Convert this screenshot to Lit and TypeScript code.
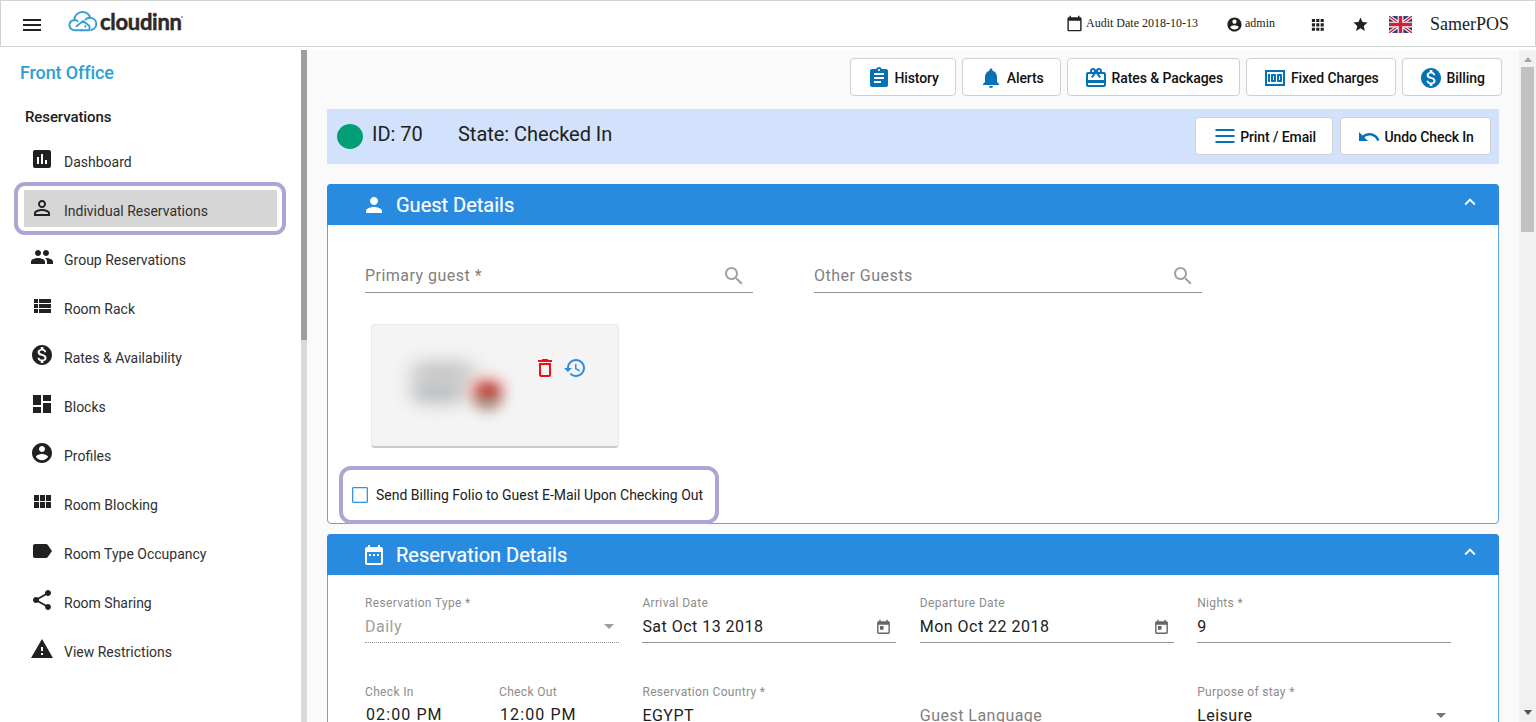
import { LitElement, html, css, svg, nothing } from "lit";
import { customElement, property } from "lit/decorators.js";
import { classMap } from "lit/directives/class-map.js";

const ICONS: Record<string, string> = {
  menu: "M3 18h18v-2H3v2zm0-5h18v-2H3v2zm0-7v2h18V6H3z",
  lines: "M2.500 18h19v-2h-19v2zm0-6h19v-2h-19v2zm0-8v2h19v-2h-19z",
  assessment:
    "M19 3H5c-1.1 0-2 .9-2 2v14c0 1.1.9 2 2 2h14c1.1 0 2-.9 2-2V5c0-1.1-.9-2-2-2zM9 17H7v-7h2v7zm4 0h-2V7h2v10zm4 0h-2v-4h2v4z",
  personOutline:
    "M12 5.9c1.16 0 2.1.94 2.1 2.1s-.94 2.1-2.1 2.1S9.9 9.16 9.9 8s.94-2.1 2.1-2.1m0 9c2.97 0 6.1 1.46 6.1 2.1v1.1H5.9V17c0-.64 3.13-2.1 6.1-2.1M12 4C9.79 4 8 5.79 8 8s1.79 4 4 4 4-1.79 4-4-1.79-4-4-4zm0 9c-2.67 0-8 1.34-8 4v3h16v-3c0-2.66-5.33-4-8-4z",
  group:
    "M16 11c1.66 0 2.99-1.34 2.99-3S17.66 5 16 5c-1.66 0-3 1.34-3 3s1.34 3 3 3zm-8 0c1.66 0 2.99-1.34 2.99-3S9.66 5 8 5C6.34 5 5 6.34 5 8s1.34 3 3 3zm0 2c-2.33 0-7 1.17-7 3.5V19h14v-2.5c0-2.33-4.67-3.5-7-3.5zm8 0c-.29 0-.62.02-.97.05 1.16.84 1.97 1.97 1.97 3.45V19h6v-2.5c0-2.33-4.67-3.5-7-3.5z",
  viewList:
    "M4 14h4v-4H4v4zm0 5h4v-4H4v4zM4 9h4V5H4v4zm5 5h12v-4H9v4zm0 5h12v-4H9v4zM9 5v4h12V5H9z",
  monetization:
    "M12 2C6.48 2 2 6.48 2 12s4.48 10 10 10 10-4.48 10-10S17.52 2 12 2zm1.41 16.09V20h-2.67v-1.93c-1.71-.36-3.16-1.46-3.27-3.4h1.96c.1 1.05.82 1.87 2.65 1.87 1.96 0 2.4-.98 2.4-1.59 0-.83-.44-1.61-2.67-2.14-2.48-.6-4.18-1.62-4.18-3.67 0-1.72 1.39-2.84 3.11-3.21V4h2.67v1.95c1.86.45 2.79 1.86 2.85 3.39H14.3c-.05-1.11-.64-1.87-2.22-1.87-1.5 0-2.4.68-2.4 1.64 0 .84.65 1.39 2.67 1.91s4.18 1.39 4.18 3.91c-.01 1.83-1.38 2.83-3.12 3.16z",
  dashboard: "M3 13h8V3H3v10zm0 8h8v-6H3v6zm10 0h8V11h-8v10zm0-18v6h8V3h-8z",
  account:
    "M12 2C6.48 2 2 6.48 2 12s4.48 10 10 10 10-4.48 10-10S17.52 2 12 2zm0 3c1.66 0 3 1.34 3 3s-1.34 3-3 3-3-1.34-3-3 1.34-3 3-3zm0 14.2c-2.5 0-4.71-1.28-6-3.22.03-1.99 4-3.08 6-3.08 1.99 0 5.97 1.09 6 3.08-1.29 1.94-3.5 3.22-6 3.22z",
  viewModule:
    "M4 11h5V5H4v6zm0 7h5v-6H4v6zm6 0h5v-6h-5v6zm6 0h5v-6h-5v6zm-6-7h5V5h-5v6zm6-6v6h5V5h-5z",
  label:
    "M17.63 5.84C17.27 5.33 16.67 5 16 5L5 5.01C3.9 5.01 3 5.9 3 7v10c0 1.1.9 1.99 2 1.99L16 19c.67 0 1.27-.33 1.63-.84L22 12l-4.37-6.16z",
  share:
    "M18 16.08c-.76 0-1.44.3-1.96.77L8.91 12.7c.05-.23.09-.46.09-.7s-.04-.47-.09-.7l7.05-4.11c.54.5 1.25.81 2.04.81 1.66 0 3-1.34 3-3s-1.34-3-3-3-3 1.34-3 3c0 .24.04.47.09.7L8.04 9.81C7.5 9.31 6.79 9 6 9c-1.66 0-3 1.34-3 3s1.34 3 3 3c.79 0 1.5-.31 2.04-.81l7.12 4.16c-.05.21-.08.43-.08.65 0 1.61 1.31 2.92 2.92 2.92 1.61 0 2.92-1.31 2.92-2.92s-1.31-2.92-2.92-2.92z",
  warning: "M1 21h22L12 2 1 21zm12-3h-2v-2h2v2zm0-4h-2v-4h2v4z",
  assignment:
    "M19 3h-4.18C14.4 1.84 13.3 1 12 1c-1.3 0-2.4.84-2.82 2H5c-1.1 0-2 .9-2 2v14c0 1.1.9 2 2 2h14c1.1 0 2-.9 2-2V5c0-1.1-.9-2-2-2zm-7 0c.55 0 1 .45 1 1s-.45 1-1 1-1-.45-1-1 .45-1 1-1zm2 14H7v-2h7v2zm3-4H7v-2h10v2zm0-4H7V7h10v2z",
  bell: "M12 22c1.1 0 2-.9 2-2h-4c0 1.1.89 2 2 2zm6-6v-5c0-3.07-1.64-5.64-4.5-6.32V4c0-.83-.67-1.5-1.5-1.5s-1.5.67-1.5 1.5v.68C7.63 5.36 6 7.92 6 11v5l-2 2v1h16v-1l-2-2z",
  gift: "M20 6h-2.18c.11-.31.18-.65.18-1 0-1.66-1.34-3-3-3-1.05 0-1.96.54-2.5 1.35l-.5.67-.5-.68C10.96 2.54 10.05 2 9 2 7.34 2 6 3.34 6 5c0 .35.07.69.18 1H4c-1.11 0-1.99.89-1.99 2L2 19c0 1.11.89 2 2 2h16c1.11 0 2-.89 2-2V8c0-1.11-.89-2-2-2zm-5-2c.55 0 1 .45 1 1s-.45 1-1 1-1-.45-1-1 .45-1 1-1zM9 4c.55 0 1 .45 1 1s-.45 1-1 1-1-.45-1-1 .45-1 1-1zm11 15H4v-2h16v2zm0-5H4V8h5.08L7 10.83 8.62 12 11 8.76l1-1.36 1 1.36L15.38 12 17 10.83 14.92 8H20v6z",
  money:
    "M5 8h2v8H5V8zm7 0H9c-.55 0-1 .45-1 1v6c0 .55.45 1 1 1h3c.55 0 1-.45 1-1V9c0-.55-.45-1-1-1zm-1 6h-1v-4h1v4zm7-6h-3c-.55 0-1 .45-1 1v6c0 .55.45 1 1 1h3c.55 0 1-.45 1-1V9c0-.55-.45-1-1-1zm-1 6h-1v-4h1v4zM2 4v16h20V4H2zm2 14V6h16v12H4z",
  undo: "M12.5 8c-2.65 0-5.05.99-6.9 2.6L2 7v9h9l-3.62-3.62c1.39-1.16 3.16-1.88 5.12-1.88 3.54 0 6.55 2.31 7.6 5.5l2.37-.78C21.08 11.03 17.15 8 12.5 8z",
  person:
    "M12 12c2.21 0 4-1.79 4-4s-1.79-4-4-4-4 1.79-4 4 1.79 4 4 4zm0 2c-2.67 0-8 1.34-8 4v2h16v-2c0-2.66-5.33-4-8-4z",
  dateRange:
    "M9 11H7v2h2v-2zm4 0h-2v2h2v-2zm4 0h-2v2h2v-2zm2-7h-1V2h-2v2H8V2H6v2H5c-1.11 0-1.99.9-1.99 2L3 20c0 1.1.89 2 2 2h14c1.1 0 2-.9 2-2V6c0-1.1-.9-2-2-2zm0 16H5V9h14v11z",
  expandLess: "M12 8l-6 6 1.41 1.41L12 10.83l4.59 4.58L18 14z",
  search:
    "M15.5 14h-.79l-.28-.27C15.41 12.59 16 11.11 16 9.5 16 5.91 13.09 3 9.5 3S3 5.91 3 9.5 5.91 16 9.5 16c1.61 0 3.09-.59 4.23-1.57l.27.28v.79l5 4.99L20.49 19l-4.99-5zm-6 0C7.01 14 5 11.99 5 9.5S7.01 5 9.5 5 14 7.01 14 9.5 11.99 14 9.5 14z",
  trash:
    "M6 19c0 1.1.9 2 2 2h8c1.1 0 2-.9 2-2V7H6v12zM8 9h8v10H8V9zm7.5-5l-1-1h-5l-1 1H5v2h14V4z",
  history:
    "M13 3c-4.97 0-9 4.03-9 9H1l3.89 3.89.07.14L9 12H6c0-3.87 3.13-7 7-7s7 3.13 7 7-3.13 7-7 7c-1.93 0-3.68-.79-4.94-2.06l-1.42 1.42C8.27 19.99 10.51 21 13 21c4.97 0 9-4.03 9-9s-4.03-9-9-9zm-1 5v5l4.28 2.54.72-1.21-3.5-2.08V8H12z",
  today:
    "M19 3h-1V1h-2v2H8V1H6v2H5c-1.11 0-1.99.9-1.99 2L3 19c0 1.1.89 2 2 2h14c1.1 0 2-.9 2-2V5c0-1.1-.9-2-2-2zm0 16H5V8h14v11zM7 10h5v5H7z",
  calendar:
    "M20 3h-1V1h-2v2H7V1H5v2H4c-1.1 0-2 .9-2 2v16c0 1.1.9 2 2 2h16c1.1 0 2-.9 2-2V5c0-1.1-.9-2-2-2zm0 18H4V8h16v13z",
  star: "M12 17.27L18.18 21l-1.64-7.03L22 9.24l-7.19-.61L12 2 9.19 8.63 2 9.24l5.46 4.73L5.82 21z",
  grid: "M3 3h5v5H3zM10 3h5v5h-5zM17 3h5v5h-5zM3 10h5v5H3zM10 10h5v5h-5zM17 10h5v5h-5zM3 17h5v5H3zM10 17h5v5h-5zM17 17h5v5h-5z",
};

@customElement("ui-icon")
export class UiIcon extends LitElement {
  @property() name = "menu";
  @property({ type: Number }) size = 24;
  static styles = css`
    :host { display: block; flex: none; }
    .glyph { display: block; fill: currentColor; }
  `;
  render() {
    return html`<svg class="glyph" width=${this.size} height=${this.size} viewBox="0 0 24 24">
      ${svg`<path d=${ICONS[this.name]}></path>`}
    </svg>`;
  }
}

@customElement("app-header")
export class AppHeader extends LitElement {
  static styles = css`
    :host { display: block; font-family: "Liberation Serif", "Times New Roman", serif; color: #212121; }
    .bar {
      box-sizing: border-box; height: 47px; display: flex; align-items: center;
      background: #fff; border: 1px solid #d2d2d2; padding: 0 26px 0 19px;
    }
    .menu { margin-top: 2px; }
    .brand { display: flex; margin-left: 24px; align-items: flex-start; height: 30px; }
    .cloud { display: block; margin-top: 1px; }
    .name {
      font: 700 22px/24px Lato, sans-serif; letter-spacing: -0.300px; color: #2c2a29; margin: 1px 0 0 2px;
      -webkit-text-stroke: 0.500px #2c2a29;
    }
    .dot { width: 2px; height: 2px; border-radius: 50%; background: #8a8a8a; margin: 7px 0 0 -1px; }
    .spacer { flex: 1; }
    .item { display: flex; align-items: center; white-space: nowrap; font-size: 12px; }
    .audit { gap: 3px; margin-right: 28px; }
    .user { gap: 2px; margin-right: 35px; }
    .apps { margin-right: 27px; }
    .fav { margin-right: 20px; }
    .flag { display: block; margin-right: 18px; margin-top: 2px; }
    .tenant { font-size: 18px; line-height: 20px; }
    .low { margin-top: 2px; }
  `;
  render() {
    return html`<header class="bar">
      <ui-icon class="menu" name="menu"></ui-icon>
      <div class="brand">
        <svg class="cloud" width="30" height="22" viewBox="0 0 30 22" fill="none" stroke="#35a0d3" stroke-width="1.9" stroke-linecap="round" stroke-linejoin="round">
          <path d="M13.5 20.2H7.2C3.8 20.2 1.400 18 1.400 15.200c0-2.700 1.900-4.800 4.800-5C6.300 5.400 9.800 2 14.300 2c4 0 6.900 2.300 7.800 5.800 3.600.3 6.200 2.700 6.200 6 0 3-1.900 5.400-4.900 6.200"></path>
          <path d="M6.200 10.200c1.500-.2 2.700.2 3.600 1"></path>
          <path d="M22.100 7.800c-1.800-.2-3.500.5-4.600 1.800"></path>
          <path d="M8.500 16.200l6.600-5.100 6.400 5v4.100h-8"></path>
          <path d="M17.300 16.300v.4"></path>
        </svg>
        <span class="name">cloudinn</span><span class="dot"></span>
      </div>
      <div class="spacer"></div>
      <div class="item audit"><ui-icon name="calendar" size="17"></ui-icon>Audit Date 2018-10-13</div>
      <div class="item user"><ui-icon class="low" name="account" size="17"></ui-icon>admin</div>
      <ui-icon class="apps low" name="grid" size="15"></ui-icon>
      <ui-icon class="fav low" name="star" size="17"></ui-icon>
      <svg class="flag" width="23" height="17" viewBox="0 0 60 44">
        <rect width="60" height="44" fill="#243a7e"></rect>
        <path d="M0 0L60 44M60 0L0 44" stroke="#fff" stroke-width="9"></path>
        <path d="M0 0L60 44M60 0L0 44" stroke="#d3213f" stroke-width="3.500"></path>
        <path d="M30 0V44M0 22H60" stroke="#fff" stroke-width="15"></path>
        <path d="M30 0V44M0 22H60" stroke="#d0203e" stroke-width="9"></path>
      </svg>
      <span class="tenant">SamerPOS</span>
    </header>`;
  }
}

const NAV = [
  { icon: "assessment", text: "Dashboard" },
  { icon: "personOutline", text: "Individual Reservations", active: true },
  { icon: "group", text: "Group Reservations" },
  { icon: "viewList", text: "Room Rack" },
  { icon: "monetization", text: "Rates & Availability" },
  { icon: "dashboard", text: "Blocks" },
  { icon: "account", text: "Profiles" },
  { icon: "viewModule", text: "Room Blocking" },
  { icon: "label", text: "Room Type Occupancy" },
  { icon: "share", text: "Room Sharing" },
  { icon: "warning", text: "View Restrictions" },
];

@customElement("side-nav")
export class SideNav extends LitElement {
  static styles = css`
    :host { display: flex; width: 307px; flex: none; background: #fff; font-family: Roboto, sans-serif; color: #212121; }
    .list { flex: 1; min-width: 0; padding-top: 11px; }
    .title { font-size: 18px; line-height: 24px; font-weight: 500; letter-spacing: -0.120px; color: #2e9fd0; padding-left: 20px; }
    .section { font-size: 15px; line-height: 20px; font-weight: 500; letter-spacing: -0.100px; padding: 22px 0 10px 25px; }
    .row { position: relative; height: 49.040px; display: flex; align-items: center; padding: 0 24px; }
    .inner { flex: 1; height: 37px; display: flex; align-items: center; padding-left: 6px; gap: 10px; white-space: nowrap; font-size: 14px; line-height: 18px; margin-top: -4px; }
    .inner.active { background: #d6d6d6; }
    .inner ui-icon { margin-top: -1.500px; }
    .text { margin-top: 5px; color: #303030; }
    .ring { position: absolute; left: 14px; right: 15px; top: -4px; height: 45px; border: 4px solid #aca6d4; border-radius: 11px; }
    .track { width: 6px; background: #d9d9d9; }
    .thumb { height: 290px; background: #9e9e9e; }
  `;
  render() {
    return html`
      <nav class="list">
        <div class="title">Front Office</div>
        <div class="section">Reservations</div>
        ${NAV.map(
          (n) => html`<div class="row">
            <div class=${classMap({ inner: true, active: !!n.active })}>
              <ui-icon name=${n.icon}></ui-icon><span class="text">${n.text}</span>
            </div>
            ${n.active ? html`<div class="ring"></div>` : nothing}
          </div>`
        )}
      </nav>
      <div class="track"><div class="thumb"></div></div>
    `;
  }
}

@customElement("action-button")
export class ActionButton extends LitElement {
  @property() icon = "";
  @property() text = "";
  static styles = css`
    :host { display: block; }
    .btn {
      box-sizing: border-box; height: 38px; display: flex; align-items: center; gap: 3.500px; padding: 0 16.200px;
      background: #fff; border: 1px solid #d0d0d0; border-radius: 4px; color: #111;
      font: 500 14px/20px Roboto, sans-serif; letter-spacing: -0.090px; white-space: nowrap;
    }
    .ic { color: #0672b6; margin-top: 1px; }
    .text { margin-top: 1px; }
  `;
  render() {
    return html`<div class="btn"><ui-icon class="ic" name=${this.icon}></ui-icon><span class="text">${this.text}</span></div>`;
  }
}

@customElement("form-field")
export class FormField extends LitElement {
  @property() label = "";
  @property() value = "";
  @property() suffix = "";
  @property({ type: Boolean }) disabled = false;
  @property({ type: Boolean }) time = false;
  static styles = css`
    :host { display: block; min-width: 0; font-family: Roboto, sans-serif; }
    .label { height: 16px; font-size: 12px; line-height: 16px; letter-spacing: 0.340px; color: #8c8c8c; white-space: nowrap; }
    .line {
      height: 31px; display: flex; align-items: center; justify-content: space-between;
      border-bottom: 1px solid #949494; font-size: 16px; letter-spacing: 0.480px; color: #212121; white-space: nowrap;
    }
    .line.disabled { color: #9e9e9e; border-bottom-style: dotted; }
    .line.empty { color: #808080; letter-spacing: 0.480px; }
    .line.search { height: 29px; padding-bottom: 2px; }
    .line.time { letter-spacing: 1.100px; padding-left: 1px; height: 30px; padding-bottom: 1px; }
    .arrow { width: 0; height: 0; border: 5px solid transparent; border-top-color: #757575; border-bottom: 0; margin-right: 5px; }
    .line.disabled .arrow { border-top-color: #9e9e9e; }
    .cal { color: #666; margin-right: 4px; margin-top: 2px; }
    .find { color: #a8a0a0; margin-right: 7px; }
  `;
  render() {
    const end =
      this.suffix === "select"
        ? html`<span class="arrow"></span>`
        : this.suffix === "date"
        ? html`<ui-icon class="cal" name="today" size="17"></ui-icon>`
        : this.suffix === "search"
        ? html`<ui-icon class="find" name="search"></ui-icon>`
        : nothing;
    const kind = {
      line: true,
      disabled: this.disabled,
      empty: !this.value,
      search: this.suffix === "search",
      time: this.time,
    };
    return html`
      <div class="label">${this.value ? this.label : nothing}</div>
      <div class=${classMap(kind)}>
        <span>${this.value || this.label}</span>${end}
      </div>
    `;
  }
}

@customElement("detail-panel")
export class DetailPanel extends LitElement {
  @property() icon = "";
  @property() heading = "";
  static styles = css`
    :host { display: block; box-sizing: border-box; background: #fff; border: 1px solid #5aa6e8; border-radius: 4px; }
    .head {
      height: 41px; margin: -1px -1px 0; display: flex; align-items: center; background: #298be0; color: #fff;
      border-radius: 4px 4px 0 0; padding: 0 18px 0 35px; font: 400 20px/24px Roboto, sans-serif; letter-spacing: 0;
    }
    .title { flex: 1; margin-left: 10px; -webkit-text-stroke: 0.200px #fff; }
    .chev { margin-top: -5px; }
  `;
  render() {
    return html`
      <div class="head">
        <ui-icon name=${this.icon}></ui-icon>
        <span class="title">${this.heading}</span>
        <ui-icon class="chev" name="expandLess" size="22"></ui-icon>
      </div>
      <slot></slot>
    `;
  }
}

@customElement("app-root")
export class AppRoot extends LitElement {
  static styles = css`
    :host { display: block; width: 1536px; height: 722px; overflow: hidden; background: #fff; font-family: Roboto, sans-serif; color: #212121; }
    .body { display: flex; height: 672px; margin-top: 3px; }
    .main { flex: 1; min-width: 0; background: #fafafa; padding: 8px 20px 0; overflow: hidden; }
    .actions { display: flex; justify-content: flex-end; gap: 6px; margin-right: -3px; }
    .status {
      box-sizing: border-box; height: 55px; margin-top: 13px; background: #d3e2fc; display: flex; align-items: center;
      padding: 0 8px 0 10px; font-size: 20px; line-height: 24px; letter-spacing: -0.020px; white-space: nowrap;
    }
    .led { width: 26px; height: 25px; border-radius: 50%; background: #039f74; margin-right: 9px; }
    .id { width: 86px; margin-top: -6px; }
    .state { flex: 1; margin-top: -6px; }
    .buttons { display: flex; gap: 6.500px; margin-top: -1px; }
    .guest { height: 340px; margin-top: 20px; }
    .resv { height: 300px; margin-top: 10px; }
    .people { display: grid; grid-template-columns: 388px 388px; column-gap: 61px; padding: 20px 37px 0; }
    .card {
      position: relative; box-sizing: border-box; width: 248px; height: 124px; margin: 31px 0 0 43.400px; background: #f4f4f4; border-radius: 4px;
      border: 1px solid #e8e8e8; border-bottom: 2px solid #cacaca; display: flex; justify-content: flex-end; align-items: flex-start; gap: 6px; padding: 31px 31.500px 0 0;
    }
    .smudge { position: absolute; border-radius: 40%; filter: blur(9px); }
    .s1 { left: 38px; top: 37px; width: 66px; height: 20px; background: #c2c2c2; }
    .s2 { left: 38px; top: 55px; width: 56px; height: 23px; background: #b8babd; }
    .s3 { left: 98px; top: 53px; width: 34px; height: 25px; background: #ea8a88; filter: blur(7px); }
    .s4 { left: 103px; top: 65px; width: 25px; height: 20px; background: #a59585; filter: blur(7px); }
    .s5 { left: 107px; top: 60px; width: 18px; height: 13px; background: #bd4c40; filter: blur(5px); }
    .del { color: #f60d0d; }
    .hist { color: #2f8de0; }
    .mail {
      box-sizing: border-box; width: 380px; height: 58px; margin: 18px 0 0 11px; border: 4px solid #aca6d4; border-radius: 12px;
      display: flex; align-items: center; padding-left: 9px; gap: 8px; font-size: 14px; white-space: nowrap;
    }
    .box { box-sizing: border-box; width: 16px; height: 16px; border: 1.500px solid #3594e0; border-radius: 1px; box-shadow: inset 0 0 0 0.500px #8cc2ee; }
    .fields { display: grid; grid-template-columns: repeat(4, 254px); column-gap: 23.400px; row-gap: 40.500px; padding: 20px 37px 0; }
    .pair { display: grid; grid-template-columns: 1fr 1fr; column-gap: 14px; }
    .scroll { width: 15px; flex: none; background: #f1f1f1; padding: 0 1px; display: flex; flex-direction: column; align-items: center; }
    .tri { width: 0; height: 0; border: 4px solid transparent; }
    .up { border-bottom: 5px solid #a3a3a3; border-top: 0; margin: 7px 0 5px; }
    .down { border-top: 5px solid #505050; border-bottom: 0; margin: auto 0 7px; }
    .thumb { width: 13px; height: 165px; background: #c1c1c1; }
  `;
  render() {
    return html`
      <app-header></app-header>
      <div class="body">
        <side-nav></side-nav>
        <main class="main">
          <div class="actions">
            <action-button icon="assignment" text="History"></action-button>
            <action-button icon="bell" text="Alerts"></action-button>
            <action-button icon="gift" text="Rates &amp; Packages"></action-button>
            <action-button icon="money" text="Fixed Charges"></action-button>
            <action-button icon="monetization" text="Billing"></action-button>
          </div>
          <div class="status">
            <span class="led"></span>
            <span class="id">ID: 70</span>
            <span class="state">State: Checked In</span>
            <div class="buttons">
              <action-button icon="lines" text="Print / Email"></action-button>
              <action-button icon="undo" text="Undo Check In"></action-button>
            </div>
          </div>
          <detail-panel class="guest" icon="person" heading="Guest Details">
            <div class="people">
              <form-field label="Primary guest *" suffix="search"></form-field>
              <form-field label="Other Guests" suffix="search"></form-field>
            </div>
            <div class="card">
              <span class="smudge s1"></span><span class="smudge s2"></span><span class="smudge s3"></span>
              <span class="smudge s4"></span><span class="smudge s5"></span>
              <ui-icon class="del" name="trash"></ui-icon>
              <ui-icon class="hist" name="history"></ui-icon>
            </div>
            <div class="mail"><span class="box"></span><span>Send Billing Folio to Guest E-Mail Upon Checking Out</span></div>
          </detail-panel>
          <detail-panel class="resv" icon="dateRange" heading="Reservation Details">
            <div class="fields">
              <form-field label="Reservation Type *" value="Daily" suffix="select" disabled></form-field>
              <form-field label="Arrival Date" value="Sat Oct 13 2018" suffix="date"></form-field>
              <form-field label="Departure Date" value="Mon Oct 22 2018" suffix="date"></form-field>
              <form-field label="Nights *" value="9"></form-field>
              <div class="pair">
                <form-field label="Check In" value="02:00 PM" time></form-field>
                <form-field label="Check Out" value="12:00 PM" time></form-field>
              </div>
              <form-field label="Reservation Country *" value="EGYPT"></form-field>
              <form-field label="Guest Language"></form-field>
              <form-field label="Purpose of stay *" value="Leisure" suffix="select"></form-field>
            </div>
          </detail-panel>
        </main>
        <div class="scroll"><span class="tri up"></span><span class="thumb"></span><span class="tri down"></span></div>
      </div>
    `;
  }
}
